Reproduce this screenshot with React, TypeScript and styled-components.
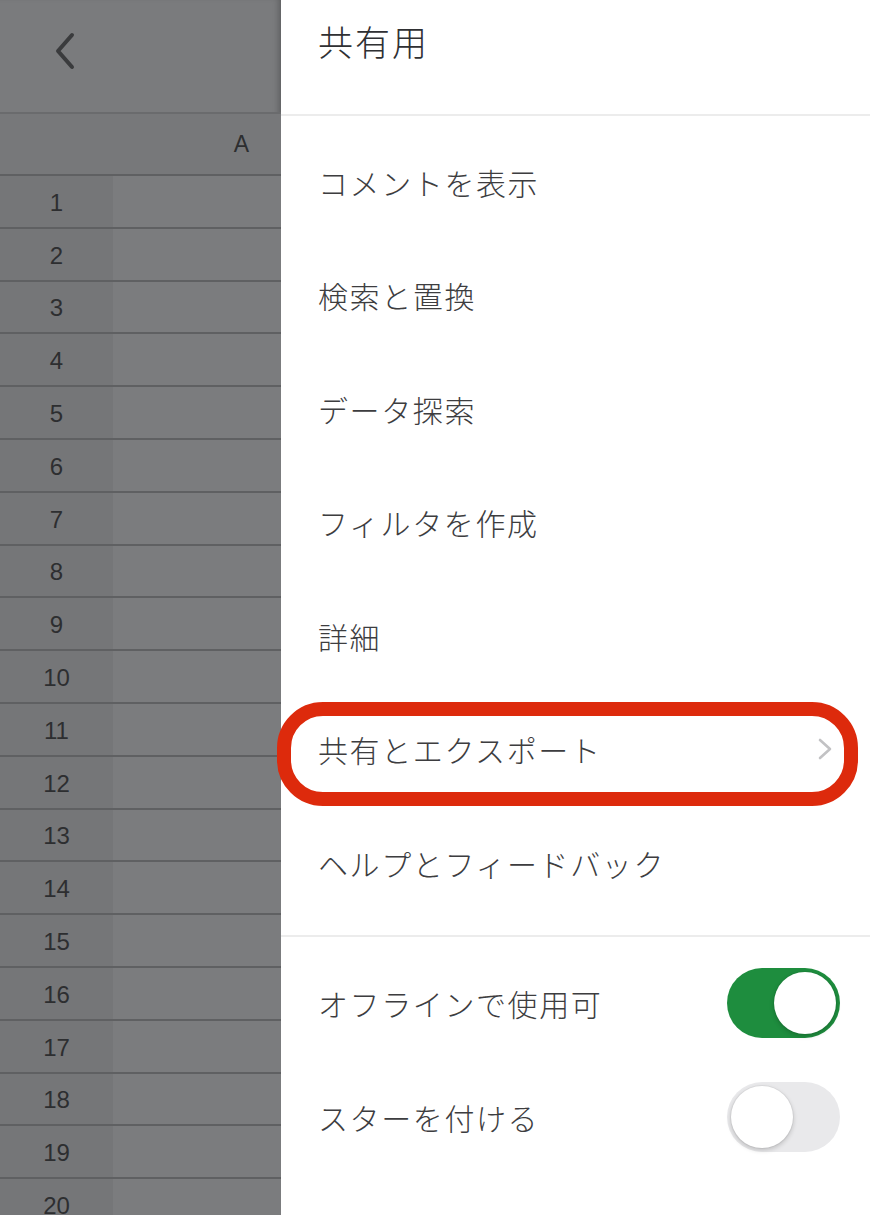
import React from 'react'
import styled, { createGlobalStyle } from 'styled-components'


const FONT = `"Noto Sans CJK JP", "Noto Sans", sans-serif`
const ROW_HEIGHT = 52.8

const GlobalStyle = createGlobalStyle`
  html, body {
    margin: 0;
    padding: 0;
    background: #fff;
  }
  body {
    font-family: ${FONT};
  }
`


const Screen = styled.div`
  position: relative;
  display: flex;
  width: 870px;
  height: 1215px;
  overflow: hidden;
`


/* dimmed spreadsheet behind the drawer */

const Sheet = styled.div`
  width: 281px;
  flex: none;
  display: flex;
  flex-direction: column;
  background: #7a7b7d;
  box-shadow: inset -6px 0 6px -4px rgba(0, 0, 0, .25);
  font-family: "Liberation Sans", Arial, sans-serif;
`

const SheetTopBar = styled.div`
  height: 114px;
  flex: none;
  display: flex;
  align-items: center;
  padding-left: 50px;
  padding-bottom: 10px;
  box-sizing: border-box;
  border-bottom: 2px solid #6a6b6d;
`

const ColumnHeader = styled.div`
  height: 60px;
  flex: none;
  display: flex;
  align-items: center;
  justify-content: flex-end;
  padding-right: 32px;
  background: #77787a;
  border-bottom: 2px solid #5f6062;
  color: #2d2e30;
  font-size: 23px;
`

const SheetRow = styled.div`
  height: ${ROW_HEIGHT}px;
  flex: none;
  display: grid;
  grid-template-columns: 113px 1fr;
  box-sizing: border-box;
  border-bottom: 2px solid #5f6062;
`

const RowNumber = styled.div`
  display: flex;
  align-items: center;
  justify-content: center;
  padding-top: 3px;
  background: #757678;
  color: #2d2e30;
  font-size: 24px;
`

const Cell = styled.div`
  background: #7b7c7e;
`


/* drawer menu */

const Drawer = styled.div`
  flex: 1;
  display: flex;
  flex-direction: column;
  background: #fff;
  color: #3d3d3f;
  font-weight: 300;
`

const DrawerHeader = styled.div`
  height: 116px;
  flex: none;
  padding: 17px 0 0 37px;
  box-sizing: border-box;
  border-bottom: 2px solid #ececec;
  font-size: 35px;
  line-height: 48px;
  letter-spacing: 2px;
  color: #2f3033;
`

const MenuSection = styled.div<{ $top: number; $bottom?: number; $divider?: boolean }>`
  padding: ${p => p.$top}px 0 ${p => p.$bottom || 0}px;
  border-bottom: ${p => (p.$divider ? '2px solid #ececec' : 'none')};
`

const MenuItem = styled.div<{ $height: number }>`
  height: ${p => p.$height}px;
  display: flex;
  align-items: center;
  justify-content: space-between;
  padding: 0 30px 0 37px;
  font-size: 30px;
  letter-spacing: 1.6px;
`

const Chevron = styled.svg`
  width: 18px;
  height: 24px;
  margin-right: 6px;
`

const ToggleTrack = styled.div<{ $on: boolean }>`
  width: 113px;
  height: 70px;
  border-radius: 35px;
  box-sizing: border-box;
  padding: 4px;
  display: flex;
  justify-content: ${p => (p.$on ? 'flex-end' : 'flex-start')};
  background: ${p => (p.$on ? '#1e8d3e' : '#e9e9eb')};
`

const ToggleKnob = styled.div`
  width: 62px;
  height: 62px;
  border-radius: 50%;
  background: #fff;
  box-shadow: 0 2px 5px rgba(0, 0, 0, .2), 0 0 0 1px rgba(0, 0, 0, .04);
`

const Highlight = styled.div`
  position: absolute;
  left: 277px;
  top: 702px;
  width: 581px;
  height: 104px;
  box-sizing: border-box;
  border: 14px solid #dd2a0c;
  border-radius: 46px;
  pointer-events: none;
`


const rows = Array.from({ length: 20 }, (_, i) => i + 1)

const menuItems = [
  'コメントを表示',
  '検索と置換',
  'データ探索',
  'フィルタを作成',
  '詳細',
  '共有とエクスポート',
  'ヘルプとフィードバック',
]

const toggles = [
  { label: 'オフラインで使用可', on: true },
  { label: 'スターを付ける', on: false },
]


const BackArrow: React.FC = () => (
  <svg width="30" height="40" viewBox="0 0 30 40">
    <path d="M22 4 L8 20 L22 36" fill="none" stroke="#3a3b3d" strokeWidth="4" strokeLinecap="round" strokeLinejoin="round" />
  </svg>
)

const Toggle: React.FC<{ on: boolean }> = ({ on }) => (
  <ToggleTrack $on={on}>
    <ToggleKnob />
  </ToggleTrack>
)


const App: React.FC = () => (
  <>
    <GlobalStyle />
    <Screen>
      <Sheet>
        <SheetTopBar>
          <BackArrow />
        </SheetTopBar>
        <ColumnHeader>A</ColumnHeader>
        {rows.map(n =>
          <SheetRow key={n}>
            <RowNumber>{n}</RowNumber>
            <Cell />
          </SheetRow>
        )}
      </Sheet>

      <Drawer>
        <DrawerHeader>共有用</DrawerHeader>

        <MenuSection $top={9} $bottom={15} $divider>
          {menuItems.map(label =>
            <MenuItem key={label} $height={113.5}>
              <span>{label}</span>
              {label === '共有とエクスポート'
                ? <Chevron viewBox="0 0 18 24">
                    <path d="M4 3 L14 12 L4 21" fill="none" stroke="#c2c2c4" strokeWidth="2.6" strokeLinecap="round" strokeLinejoin="round" />
                  </Chevron>
                : null}
            </MenuItem>
          )}
        </MenuSection>

        <MenuSection $top={9}>
          {toggles.map(t =>
            <MenuItem key={t.label} $height={114}>
              <span>{t.label}</span>
              <Toggle on={t.on} />
            </MenuItem>
          )}
        </MenuSection>
      </Drawer>

      <Highlight />
    </Screen>
  </>
)


export default App
